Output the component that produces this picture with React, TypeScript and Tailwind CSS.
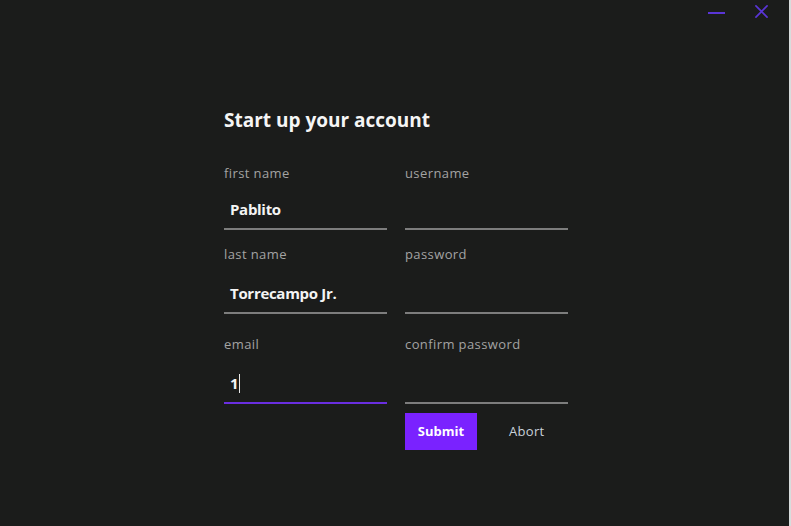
import * as React from "react";

interface FieldProps {
  label: string;
  value?: string;
  focused?: boolean;
  inputClass: string;
}

// one labelled input with an underline
const Field = ({ label, value, focused, inputClass }: FieldProps) => {
  return (
    <div className="flex flex-col">
      <div className="h-[20px] flex items-center text-[13px] text-[#a3a3a3] leading-none tracking-[0.4px]">{label}</div>
      <div
        className={`${inputClass} flex items-end pb-[9px] pl-[6px] border-b-2 ${
          focused ? "border-[#6a2ee0]" : "border-[#7d7d7d]"
        }`}
      >
        {value !== undefined && (
          <span className="text-[15px] font-bold text-[#f4f4f4] leading-[20px] tracking-[-0.3px] flex items-center">
            {value}
            {focused && <span className="inline-block w-px h-[19px] bg-[#e8e8e8] ml-[1px]" />}
          </span>
        )}
      </div>
    </div>
  );
};

const App: React.FunctionComponent = () => {
  return (
    <div className="flex w-[791px] h-[526px] overflow-hidden" style={{ fontFamily: "'Open Sans', Lato, sans-serif" }}>
      <div className="w-[789px] h-full bg-[#1b1c1b] flex flex-col">
        <div className="h-[24px] flex justify-end items-center pr-[21px] gap-[30px]">
          <div className="w-[17px] h-[2px] bg-[#5a35d6] mt-[1px]" />
          <svg width="13" height="13" viewBox="0 0 14 14" className="mb-[1px]">
            <path d="M1 1 L13 13 M13 1 L1 13" stroke="#5a35d6" strokeWidth="1.8" strokeLinecap="round" />
          </svg>
        </div>
        <div className="ml-[224px] mt-[84px] flex flex-col">
          <h1 className="text-[19px] font-bold text-[#f5f5f5] leading-[24px]">Start up your account</h1>
          <div className="grid grid-cols-[163px_163px] gap-x-[18px] mt-[31px]">
            <Field label="first name" value="Pablito" inputClass="h-[47px]" />
            <Field label="username" inputClass="h-[47px]" />
          </div>
          <div className="grid grid-cols-[163px_163px] gap-x-[18px] mt-[14px]">
            <Field label="last name" value="Torrecampo Jr." inputClass="h-[50px]" />
            <Field label="password" inputClass="h-[50px]" />
          </div>
          <div className="grid grid-cols-[163px_163px] gap-x-[18px] mt-[20px]">
            <Field label="email" value="1" focused inputClass="h-[50px]" />
            <Field label="confirm password" inputClass="h-[50px]" />
          </div>
          <div className="flex items-center ml-[181px] mt-[9px]">
            <button className="w-[72px] h-[37px] bg-[#7a22ff] text-white text-[13px] font-bold">Submit</button>
            <button className="ml-[32px] text-[13px] text-[#c9d2da] tracking-[0.3px]">Abort</button>
          </div>
        </div>
      </div>
      <div className="w-[2px] h-full bg-[#d8dcdc]" />
    </div>
  );
};

export default App;
